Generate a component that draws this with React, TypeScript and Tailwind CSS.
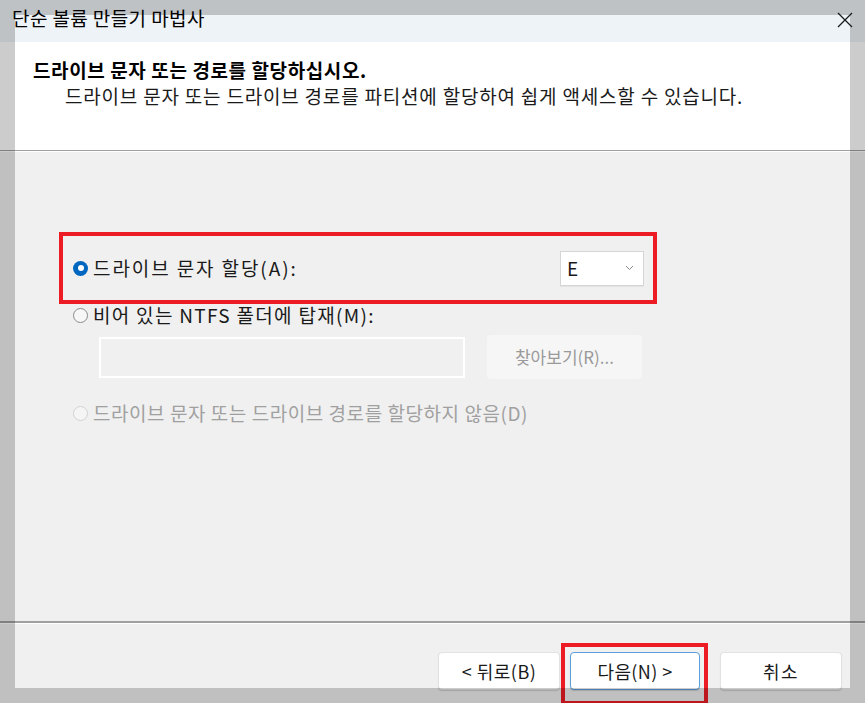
import React from "react";

const font = { fontFamily: '"Noto Sans CJK KR", "Noto Sans", sans-serif' };

function Radio({ state }: { state: "on" | "off" | "disabled" }) {
  if (state === "on") {
    return (
      <span className="flex h-[15px] w-[15px] shrink-0 items-center justify-center rounded-full bg-[#0067c0]">
        <span className="h-[6px] w-[6px] rounded-full bg-white" />
      </span>
    );
  }
  return (
    <span
      className={
        state === "off"
          ? "h-[15px] w-[15px] shrink-0 rounded-full border border-[#8a8a8a] bg-[#f7f7f7]"
          : "h-[15px] w-[15px] shrink-0 rounded-full border border-[#d2d2d2] bg-[#f5f5f5]"
      }
    />
  );
}

function Button({ label, primary, track }: { label: string; primary?: boolean; track: string }) {
  return (
    <div
      className={`flex h-[38px] items-center justify-center rounded-[4px] bg-white text-[18px] text-[#1a1a1a] shadow-[0_1px_1px_rgba(0,0,0,0.15)] ${track} ${
        primary ? "w-[130px] border border-[#5a9fdc]" : "w-[122px] border border-[#e2e2e2]"
      }`}
    >
      {label}
    </div>
  );
}

export default function App() {
  return (
    <div className="relative h-[703px] w-[865px] overflow-hidden bg-[#f0f0f0]" style={font}>
      {/* title bar */}
      <div className="flex h-[42px] items-start justify-between bg-[#eef3f7] pl-[12px] pr-[12px] pt-[4px]">
        <span className="relative z-10 text-[19px] leading-[28px] tracking-[0.4px] text-black">
          단순 볼륨 만들기 마법사
        </span>
        <svg className="relative z-10 mt-[8px]" width="16" height="16" viewBox="0 0 16 16">
          <path d="M1 1 L15 15 M15 1 L1 15" stroke="#1a1a1a" strokeWidth="1.3" />
        </svg>
      </div>

      {/* header */}
      <div className="h-[108px] bg-white pl-[33px] pt-[16px]">
        <div className="text-[19px] font-bold leading-[24px] tracking-[0.6px] text-black">
          드라이브 문자 또는 경로를 할당하십시오.
        </div>
        <div className="pl-[32px] pt-[2px] text-[19px] leading-[24px] tracking-[0.8px] text-[#1a1a1a]">
          드라이브 문자 또는 드라이브 경로를 파티션에 할당하여 쉽게 액세스할 수 있습니다.
        </div>
      </div>
      <div className="h-[1px] bg-[#a0a0a0]" />
      <div className="h-[1px] bg-white" />

      {/* body */}
      <div className="h-[469px] pl-[59px] pt-[80px] text-[19px]">
        <div className="flex h-[72px] w-[598px] items-center justify-between border-4 border-[#ed1c24] pl-[10px] pr-[9px]">
          <div className="flex items-center gap-[5px] text-[#1a1a1a]">
            <Radio state="on" />
            <span className="tracking-[1.9px]">드라이브 문자 할당(A):</span>
          </div>
          <div className="flex h-[35px] w-[84px] items-center justify-between border border-[#d5d5d5] bg-white pl-[6px] pr-[9px] shadow-[0_1px_0_rgba(0,0,0,0.05)]">
            <span className="text-[#1a1a1a]">E</span>
            <svg width="9" height="6" viewBox="0 0 9 6">
              <path d="M1 1 L4.5 4.5 L8 1" stroke="#8a8a8a" strokeWidth="1" fill="none" />
            </svg>
          </div>
        </div>

        <div className="flex h-[22px] items-center gap-[5px] pl-[14px] text-[#1a1a1a]">
          <Radio state="off" />
          <span className="tracking-[1.3px]">비어 있는 NTFS 폴더에 탑재(M):</span>
        </div>

        <div className="mt-[9px] flex items-center gap-[22px] pl-[40px]">
          <div className="h-[41px] w-[366px] border-2 border-white bg-[#f0f0f0]" />
          <div className="flex h-[44px] w-[155px] items-center justify-center rounded-[4px] bg-[#f6f6f6] text-[17px] text-[#9a9a9a]">
            찾아보기(R)...
          </div>
        </div>

        <div className="mt-[22px] flex h-[24px] items-center gap-[5px] pl-[14px] text-[#a0a0a0]">
          <Radio state="disabled" />
          <span className="tracking-[0.55px]">드라이브 문자 또는 드라이브 경로를 할당하지 않음(D)</span>
        </div>
      </div>
      <div className="h-[2px] bg-[#a0a0a0]" />
      <div className="h-[1px] bg-white" />

      {/* footer */}
      <div className="flex items-start pl-[438px] pt-[19px]">
        <div className="mt-[9px]">
          <Button label="< 뒤로(B)" track="tracking-[0.5px]" />
        </div>
        <div className="ml-[1px] h-[62px] w-[147px] border-[4px] border-[#ed1c24] pl-[5px] pt-[5px]">
          <Button label="다음(N) >" primary track="tracking-[0.4px]" />
        </div>
        <div className="ml-[12px] mt-[9px]">
          <Button label="취소" track="tracking-[1.5px]" />
        </div>
      </div>

      {/* dimming frame */}
      <div className="absolute left-0 top-0 h-[15px] w-[865px] bg-black/20" />
      <div className="absolute left-0 top-[15px] h-[688px] w-[15px] bg-black/20" />
      <div className="absolute left-[850px] top-[15px] h-[688px] w-[15px] bg-black/20" />
      <div className="absolute left-[15px] top-[688px] h-[15px] w-[835px] bg-black/20" />
    </div>
  );
}
